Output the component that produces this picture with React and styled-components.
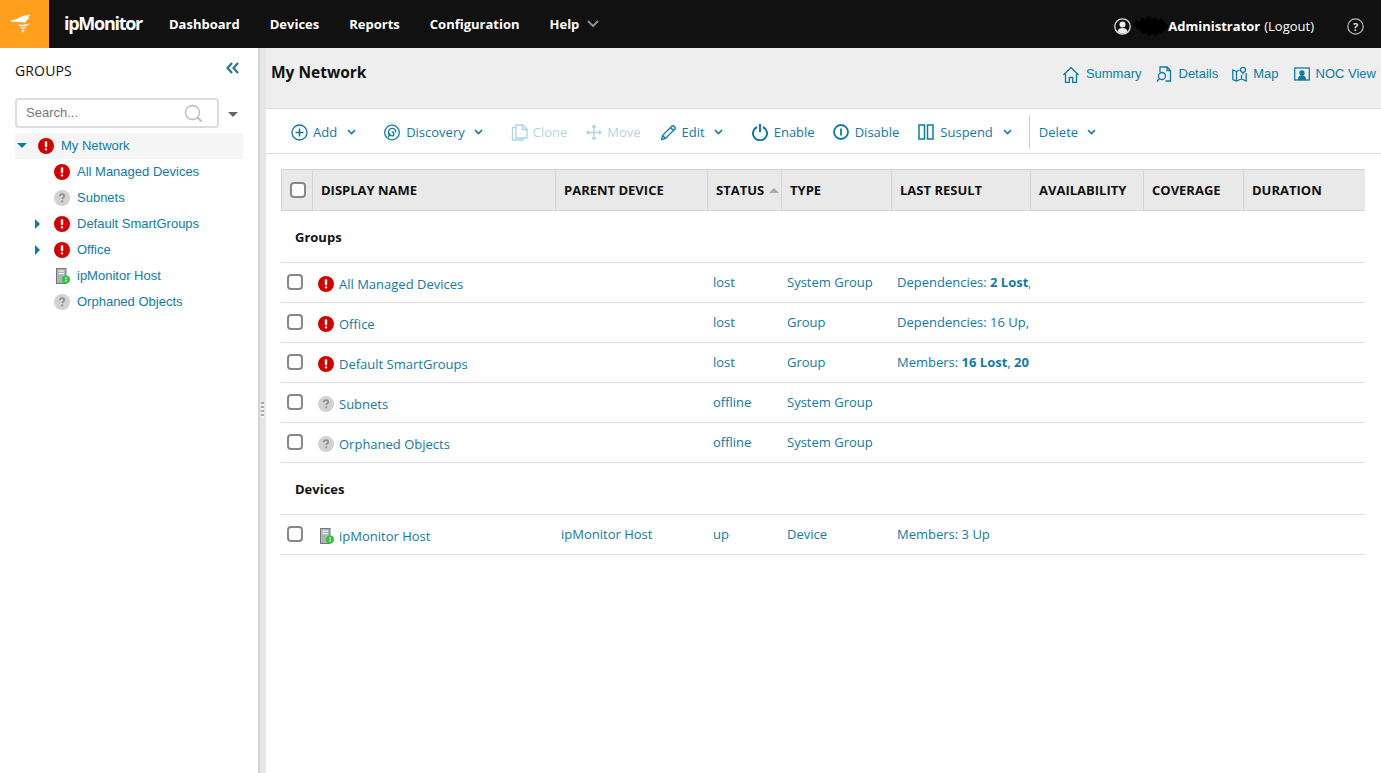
import React from "react";
import styled, { createGlobalStyle } from "styled-components";

const Global = createGlobalStyle`
  html, body { margin: 0; padding: 0; height: 100%; background: #fff; overflow: hidden; }
  #root { height: 100%; }
  * { box-sizing: border-box; }
`;

const BLUE = "#0f7ba5";
const OPEN = `"Open Sans", "Liberation Sans", sans-serif`;
const ARIAL = `"Liberation Sans", Arial, sans-serif`;

const Page = styled.div`
  width: 1381px; height: 773px; display: flex; flex-direction: column; overflow: hidden;
  font-family: ${OPEN}; color: ${BLUE};
`;
const TopBar = styled.header`
  height: 48px; flex: none; background: #111; display: flex; align-items: center; color: #fff;
`;
const LogoTile = styled.div`
  width: 49px; height: 48px; background: #ff9f1c; display: flex; align-items: center; justify-content: center; flex: none;
  padding: 0 9px 0 0;
`;
const Brand = styled.div`
  font: 700 18px/48px ${OPEN}; letter-spacing: -1.28px; margin: -3px 26px 0 15px; width: 79px; white-space: nowrap;
`;
const Nav = styled.nav`display: flex; align-items: center; gap: 30px;`;
const NavItem = styled.span`
  font: 700 13px/18px ${OPEN}; display: flex; align-items: center; gap: 8px; white-space: nowrap;
`;
const UserArea = styled.div`
  margin-left: auto; display: flex; align-items: center; padding-right: 17px; padding-top: 4px;
`;
const Redacted = styled.svg`
  width: 35px; height: 20px; margin: 0 0 0 2px; flex: none;
`;
const UserName = styled.span`font: 700 13px/18px ${OPEN}; white-space: nowrap;`;
const Logout = styled.span`font: 400 13px/18px ${OPEN}; margin-left: 4px; margin-right: 33px; white-space: nowrap;`;
const Body = styled.div`flex: 1; display: flex; min-height: 0;`;

const Sidebar = styled.aside`width: 258px; flex: none; padding: 0 15px; background: #fff;`;
const SideHead = styled.div`
  height: 46px; display: flex; justify-content: space-between; align-items: center; padding-right: 4px;
`;
const SideTitle = styled.span`font: 400 14px/18px ${OPEN}; color: #111; letter-spacing: 0.15px;`;
const SearchRow = styled.div`display: flex; align-items: center; margin: 4px 0 5px; gap: 9px;`;
const SearchBox = styled.div`
  width: 204px; height: 30px; border: 2px solid #ddd; border-radius: 4px; display: flex; align-items: center;
  justify-content: space-between; padding: 0 14px 0 9px; font: 400 13px/18px ${ARIAL}; color: #777; background: #fff;
`;
const Caret = styled.span`
  width: 0; height: 0; border-left: 5px solid transparent; border-right: 5px solid transparent;
  border-top: 5px solid #666; margin-top: 2px;
`;
const Tree = styled.div`width: 228px;`;
const TreeRow = styled.div`
  height: 26px; display: flex; align-items: center; padding-left: ${p => p.$indent}px;
  background: ${p => (p.$active ? "#f5f5f5" : "transparent")}; font: 400 13px/18px ${ARIAL}; white-space: nowrap;
  position: relative;
`;
const TreeLabel = styled.span`margin-top: -1px;`;
const TreeIcon = styled.span`display: flex; width: 16px; justify-content: center; margin-right: 7px;`;
const Toggle = styled.span`
  position: absolute; left: ${p => p.$left}px; top: ${p => p.$top}px; width: 0; height: 0;
  ${p => p.$open
    ? `border-left: 5px solid transparent; border-right: 5px solid transparent; border-top: 5px solid ${BLUE};`
    : `border-top: 5px solid transparent; border-bottom: 5px solid transparent; border-left: 5px solid ${BLUE};`}
`;

const Splitter = styled.div`
  width: 8px; flex: none; background: #e6e6e6; border-left: 2px solid #d4d4d4;
  display: flex; align-items: center; justify-content: center; padding-right: 2px;
`;
const Grip = styled.div`
  width: 3px; height: 16px; margin-top: -2px;
  background: repeating-linear-gradient(to bottom, #a8a8a8 0 2px, #f4f4f4 2px 4px);
`;

const Main = styled.main`flex: 1; min-width: 0; display: flex; flex-direction: column;`;
const MainHead = styled.div`
  height: 61px; flex: none; background: #eee; border-bottom: 1px solid #ddd; display: flex;
  justify-content: space-between; padding: 12px 5px 0 5px;
`;
const Title = styled.h1`margin: 0; font: 700 15.5px/24px ${OPEN}; color: #111;`;
const ViewLinks = styled.div`display: flex; height: 24px; align-items: center; padding-top: 4px;`;
const ViewLink = styled.span`
  display: flex; align-items: center; gap: ${p => p.$gap ?? 7}px; margin-right: ${p => p.$after ?? 0}px;
  font: 400 13px/18px ${ARIAL}; white-space: nowrap;
`;
const Toolbar = styled.div`
  height: 45px; flex: none; border-bottom: 1px solid #ddd; display: flex; align-items: center; padding: 2px 0 0 25px;
  font: 400 13px/18px ${OPEN};
`;
const Tool = styled.span`
  display: flex; align-items: center; gap: ${p => p.$gap ?? 6}px; margin-right: ${p => p.$after}px; white-space: nowrap;
  opacity: ${p => (p.$off ? 0.33 : 1)};
`;
const Divider = styled.span`width: 1px; height: 32px; background: #ccc; margin: 0 9px 0 0;`;

const COLS = "32px 242px 152px 74px 110px 139px 113px 100px 122px";
const HEAD_COLS = "31px 243px 152px 74px 110px 139px 113px 100px 121px";
const TableWrap = styled.div`margin: 15px 16px 0 15px; width: 1084px;`;
const HeadRow = styled.div`
  display: grid; grid-template-columns: ${HEAD_COLS}; height: 42px; background: #e9e9e9;
  border: 1px solid #d4d4d4; border-width: 1px 0 1px 1px;
`;
const HeadCell = styled.div`
  display: flex; align-items: center; gap: 5px; padding-left: 8px; font: 700 13px/18px ${OPEN}; color: #111;
  border-right: 1px solid #d4d4d4; white-space: nowrap; overflow: hidden;
  &:last-child { border-right: 0; }
`;
const SortUp = styled.span`
  width: 0; height: 0; border-left: 5px solid transparent; border-right: 5px solid transparent; border-bottom: 5px solid #aaa;
`;
const Section = styled.div`
  height: ${p => p.$h}px; padding: 17px 0 0 14px; font: 700 13px/18px ${OPEN}; color: #111; border-bottom: 1px solid #ddd;
`;
const Row = styled.div`
  display: grid; grid-template-columns: ${COLS}; height: 40px; border-bottom: 1px solid #ddd; font: 400 13px/18px ${OPEN};
`;
const Cell = styled.div`
  padding: 10px 0 0 6px; white-space: nowrap; overflow: hidden;
`;
const NameCell = styled.div`
  display: flex; align-items: center; padding: 3px 0 0 5px; gap: 5px; white-space: nowrap; grid-column: 2;
`;
const CheckBox = styled.span`
  display: block; width: 16px; height: 16px; border: 2px solid #888; border-radius: 4px; background: #fff; flex: none;
`;
const CheckCell = styled.div`display: flex; padding: 11px 0 0 6px; align-items: flex-start;`;
const HeadCheck = styled.div`display: flex; align-items: center; justify-content: center; border-right: 1px solid #d4d4d4; padding-left: 1px;`;
const Strong = styled.b`font-weight: 700;`;

const Alert = ({ size = 16 }) => (
  <svg width={size} height={size} viewBox="0 0 16 16">
    <circle cx="8" cy="8" r="8" fill="#d40000" />
    <rect x="6.8" y="3.2" width="2.4" height="6" rx="0.8" fill="#fff" />
    <rect x="6.8" y="10.2" width="2.4" height="2.4" rx="1" fill="#fff" />
  </svg>
);
const Unknown = ({ size = 16 }) => (
  <svg width={size} height={size} viewBox="0 0 16 16">
    <circle cx="8" cy="8" r="8" fill="#d2d2d2" />
    <path d="M5.9 6.2c0-1.3 1-2 2.2-2s2.1.7 2.1 1.8c0 1.500-1.800 1.600-1.800 3" fill="none" stroke="#8d8d8d" strokeWidth="1.700" />
    <rect x="7.300" y="10.400" width="1.900" height="1.900" fill="#8d8d8d" />
  </svg>
);
const Host = () => (
  <svg width="16" height="16" viewBox="-2 0 16 16">
    <rect x="0.500" y="0.500" width="9.500" height="15" fill="#aeb4b8" stroke="#6f7a80" />
    <rect x="2.500" y="2.500" width="5.500" height="1.200" fill="#f2f2f2" />
    <rect x="2.500" y="5" width="5.500" height="1.200" fill="#f2f2f2" />
    <circle cx="10" cy="11.500" r="4" fill="#2fc63f" />
    <rect x="9.300" y="9.400" width="1.400" height="1.500" fill="#fff" />
    <rect x="9.300" y="11.800" width="1.400" height="1.700" fill="#fff" />
  </svg>
);

const Ico = ({ w = 16, h = 16, sw = 1.300, children }) => (
  <svg width={w} height={h} viewBox={`0 0 ${w} ${h}`} fill="none" stroke={BLUE} strokeWidth={sw}>{children}</svg>
);
const Chevron = () => (
  <svg width="9" height="6" viewBox="0 0 9 6" fill="none" stroke={BLUE} strokeWidth="1.600"><path d="M1 1l3.500 3.500L8 1" /></svg>
);

const rows = [
  { icon: <Alert />, name: "All Managed Devices", status: "lost", type: "System Group", res: <>Dependencies: <Strong>2 Lost</Strong>,</> },
  { icon: <Alert />, name: "Office", status: "lost", type: "Group", res: "Dependencies: 16 Up," },
  { icon: <Alert />, name: "Default SmartGroups", status: "lost", type: "Group", res: <>Members: <Strong>16 Lost</Strong>, <Strong>20</Strong></> },
  { icon: <Unknown />, name: "Subnets", status: "offline", type: "System Group" },
  { icon: <Unknown />, name: "Orphaned Objects", status: "offline", type: "System Group" },
];

const DataRow = ({ r }) => (
  <Row>
    <CheckCell><CheckBox /></CheckCell>
    <NameCell>{r.icon}<span>{r.name}</span></NameCell>
    <Cell>{r.parent}</Cell>
    <Cell>{r.status}</Cell>
    <Cell>{r.type}</Cell>
    <Cell>{r.res}</Cell>
  </Row>
);

const tree = [
  { indent: 23, icon: <Alert />, label: "My Network", active: true, toggle: { left: 2, top: 10, open: true } },
  { indent: 39, icon: <Alert />, label: "All Managed Devices" },
  { indent: 39, icon: <Unknown />, label: "Subnets" },
  { indent: 39, icon: <Alert />, label: "Default SmartGroups", toggle: { left: 20, top: 8 } },
  { indent: 39, icon: <Alert />, label: "Office", toggle: { left: 20, top: 8 } },
  { indent: 39, icon: <Host />, label: "ipMonitor Host" },
  { indent: 39, icon: <Unknown />, label: "Orphaned Objects" },
];

export default function App() {
  return (
    <Page>
      <Global />
      <TopBar>
        <LogoTile>
          <svg width="21" height="19" viewBox="0 0 21 19" fill="#fff">
            <path d="M0 5.800C4 4.900 7 4.100 9.500 2.600 12 1.100 15 .3 20.500 0c-1.400 1-2.400 1.800-3 2.800 1-.2 1.700-.2 2.700-.1-2.400 1-3.700 2.500-5 5C11.500 7 5 8 0 5.800z" />
            <path d="M7.800 9.500c3.500.6 7.300.2 12.800-1.300-2.800 2-5.500 3-9.300 3.300-1.500-.4-2.700-1-3.500-2z" />
            <path d="M10.500 12.600c2.300.2 4.700-.1 7-1-2 1.600-3.500 2.300-5.300 2.700-.7-.4-1.300-1-1.700-1.700z" />
            <path d="M12 15l3.400-.6c-1.500 1.300-2.800 2.700-3.700 4.600z" />
          </svg>
        </LogoTile>
        <Brand>ipMonitor</Brand>
        <Nav>
          <NavItem>Dashboard</NavItem>
          <NavItem>Devices</NavItem>
          <NavItem>Reports</NavItem>
          <NavItem>Configuration</NavItem>
          <NavItem>
            Help
            <svg width="12" height="8" viewBox="0 0 12 8" fill="none" stroke="#8a8a8a" strokeWidth="2"><path d="M1 1l5 5 5-5" /></svg>
          </NavItem>
        </Nav>
        <UserArea>
          <svg width="17" height="17" viewBox="0 0 17 17">
            <circle cx="8.500" cy="8.500" r="7.700" fill="none" stroke="#ddd" strokeWidth="1.300" />
            <circle cx="8.500" cy="6.500" r="3" fill="#eee" />
            <path d="M3.500 13.500c.4-2.500 2.500-3.500 5-3.500s4.600 1 5 3.500c-1.300 1.200-3 1.900-5 1.900s-3.700-.7-5-1.900z" fill="#eee" />
          </svg>
          <Redacted viewBox="0 0 35 20">
            <path d="M0 8l3-4 3 2 3-5 3 3 3-4 4 3 3-2 3 3 4-1 3 4 3 2-1 4-3 1-2 4-4-1-3 3-3-2-4 2-2-3-4 1-2-4-3-1z" fill="#000" />
          </Redacted>
          <UserName>Administrator</UserName>
          <Logout>(Logout)</Logout>
          <svg width="17" height="17" viewBox="0 0 17 17">
            <circle cx="8.500" cy="8.500" r="7.700" fill="none" stroke="#bbb" strokeWidth="1.200" />
            <text x="8.500" y="12.500" textAnchor="middle" fontSize="11" fontWeight="700" fontFamily={OPEN} fill="#ddd">?</text>
          </svg>
        </UserArea>
      </TopBar>
      <Body>
        <Sidebar>
          <SideHead>
            <SideTitle>GROUPS</SideTitle>
            <svg width="13" height="12" viewBox="0 0 13 12" fill="none" stroke="#2b7596" strokeWidth="2.200" style={{ marginTop: -7 }}>
              <path d="M6 1L1.500 6 6 11M12 1L7.500 6 12 11" />
            </svg>
          </SideHead>
          <SearchRow>
            <SearchBox>
              Search...
              <svg width="19" height="19" viewBox="0 0 19 19" fill="none" stroke="#bbb" strokeWidth="1.400">
                <circle cx="8.500" cy="8.500" r="7" />
                <path d="M13.500 13.500l4 4" strokeWidth="2" />
              </svg>
            </SearchBox>
            <Caret />
          </SearchRow>
          <Tree>
            {tree.map(t => (
              <TreeRow key={t.label} $indent={t.indent} $active={t.active}>
                {t.toggle && <Toggle $left={t.toggle.left} $top={t.toggle.top} $open={t.toggle.open} />}
                <TreeIcon>{t.icon}</TreeIcon>
                <TreeLabel>{t.label}</TreeLabel>
              </TreeRow>
            ))}
          </Tree>
        </Sidebar>
        <Splitter><Grip /></Splitter>
        <Main>
          <MainHead>
            <Title>My Network</Title>
            <ViewLinks>
              <ViewLink $after={14}>
                <Ico w={16} h={17}><path d="M.5 9L8 1.500 15.500 9M2.500 7v9.500h3.800v-5h3.400v5h3.800V7" /></Ico>Summary
              </ViewLink>
              <ViewLink $after={14}>
                <Ico w={16} h={17}><path d="M4 6V1h7l3.500 3.500V15H9.500M11 1v3.500h3.500" /><circle cx="6" cy="10" r="3.500" /><path d="M3.500 12.500L1 15.500" /></Ico>Details
              </ViewLink>
              <ViewLink $gap={6} $after={15}>
                <Ico w={15} h={16}><path d="M.8 4l3.700 1.500v9.500L.8 13.500zM4.500 5.500l3-1.500M4.500 15l5-2 4.700 2V7M9.500 9v4" /><circle cx="11" cy="3.800" r="2.500" /><path d="M11 6.500v2" /></Ico>Map
              </ViewLink>
              <ViewLink $gap={6}>
                <Ico w={16} h={15}>
                  <rect x=".7" y="1" width="14.600" height="12" />
                  <circle cx="8" cy="6" r="2" fill={BLUE} />
                  <path d="M4.500 12.500c.3-2.400 1.700-3.500 3.500-3.500s3.200 1.100 3.500 3.500z" fill={BLUE} />
                </Ico>NOC View
              </ViewLink>
            </ViewLinks>
          </MainHead>
          <Toolbar>
            <Tool $after={10} $gap={5}>
              <Ico w={17} h={17}><circle cx="8.500" cy="8.500" r="7.500" /><path d="M8.500 4.500v8M4.500 8.500h8" strokeWidth="1.600" /></Ico>Add
            </Tool>
            <Tool $after={28} $gap={0}><Chevron /></Tool>
            <Tool $after={9}>
              <Ico w={16} h={17}><circle cx="8" cy="8.500" r="7.300" /><path d="M4.800 10.500C3.500 7 5.500 4.300 8.300 4.300c2.400 0 3.900 2 3.400 4.200M8 8a1.900 1.900 0 1 1 0 3.800c-1 0-2-.5-2.500-1.500L4.500 13.500" /></Ico>Discovery
            </Tool>
            <Tool $after={28} $gap={0}><Chevron /></Tool>
            <Tool $off $after={19} $gap={5}>
              <Ico w={17} h={17}><path d="M5 1h7l4 4v9H5zM11.500 1v4.500H16M5 3.500H1.500V16H12v-2" /></Ico>Clone
            </Tool>
            <Tool $off $after={19} $gap={5}>
              <Ico w={16} h={17}><path d="M8 1.500v14M1 8.500h14M6 3.500l2-2 2 2M6 13.500l2 2 2-2M3 6.500l-2 2 2 2M13 6.500l2 2-2 2" /></Ico>Move
            </Tool>
            <Tool $after={9} $gap={5}>
              <Ico w={17} h={17}><path d="M1.500 15.500l1-4L11.500 2.500a1.500 1.500 0 0 1 3 3L5.500 14.500zM10.500 3.500l3 3M2.500 11.500l3 3" /></Ico>Edit
            </Tool>
            <Tool $after={29} $gap={0}><Chevron /></Tool>
            <Tool $after={18}>
              <Ico w={16} h={18} sw={2}><path d="M5 4a7 7 0 1 0 6 0M8 1v8" /></Ico>Enable
            </Tool>
            <Tool $after={19}>
              <Ico w={16} h={16} sw={1.800}><circle cx="8" cy="8" r="7" /><path d="M8 4.500v7" /></Ico>Disable
            </Tool>
            <Tool $after={10}>
              <Ico w={16} h={16} sw={1.500}><rect x="1" y="1" width="5.500" height="14" /><rect x="9.500" y="1" width="5.500" height="14" /></Ico>Suspend
            </Tool>
            <Tool $after={17} $gap={0}><Chevron /></Tool>
            <Divider />
            <Tool $after={9}>Delete</Tool>
            <Tool $after={0} $gap={0}><Chevron /></Tool>
          </Toolbar>
          <TableWrap>
            <HeadRow>
              <HeadCheck><CheckBox /></HeadCheck>
              <HeadCell>DISPLAY NAME</HeadCell>
              <HeadCell>PARENT DEVICE</HeadCell>
              <HeadCell>STATUS<SortUp /></HeadCell>
              <HeadCell>TYPE</HeadCell>
              <HeadCell>LAST RESULT</HeadCell>
              <HeadCell>AVAILABILITY</HeadCell>
              <HeadCell>COVERAGE</HeadCell>
              <HeadCell>DURATION</HeadCell>
            </HeadRow>
            <Section $h={52}>Groups</Section>
            {rows.map(r => <DataRow key={r.name} r={r} />)}
            <Section $h={52}>Devices</Section>
            <DataRow r={{ icon: <Host />, name: "ipMonitor Host", parent: "ipMonitor Host", status: "up", type: "Device", res: "Members: 3 Up" }} />
          </TableWrap>
        </Main>
      </Body>
    </Page>
  );
}
